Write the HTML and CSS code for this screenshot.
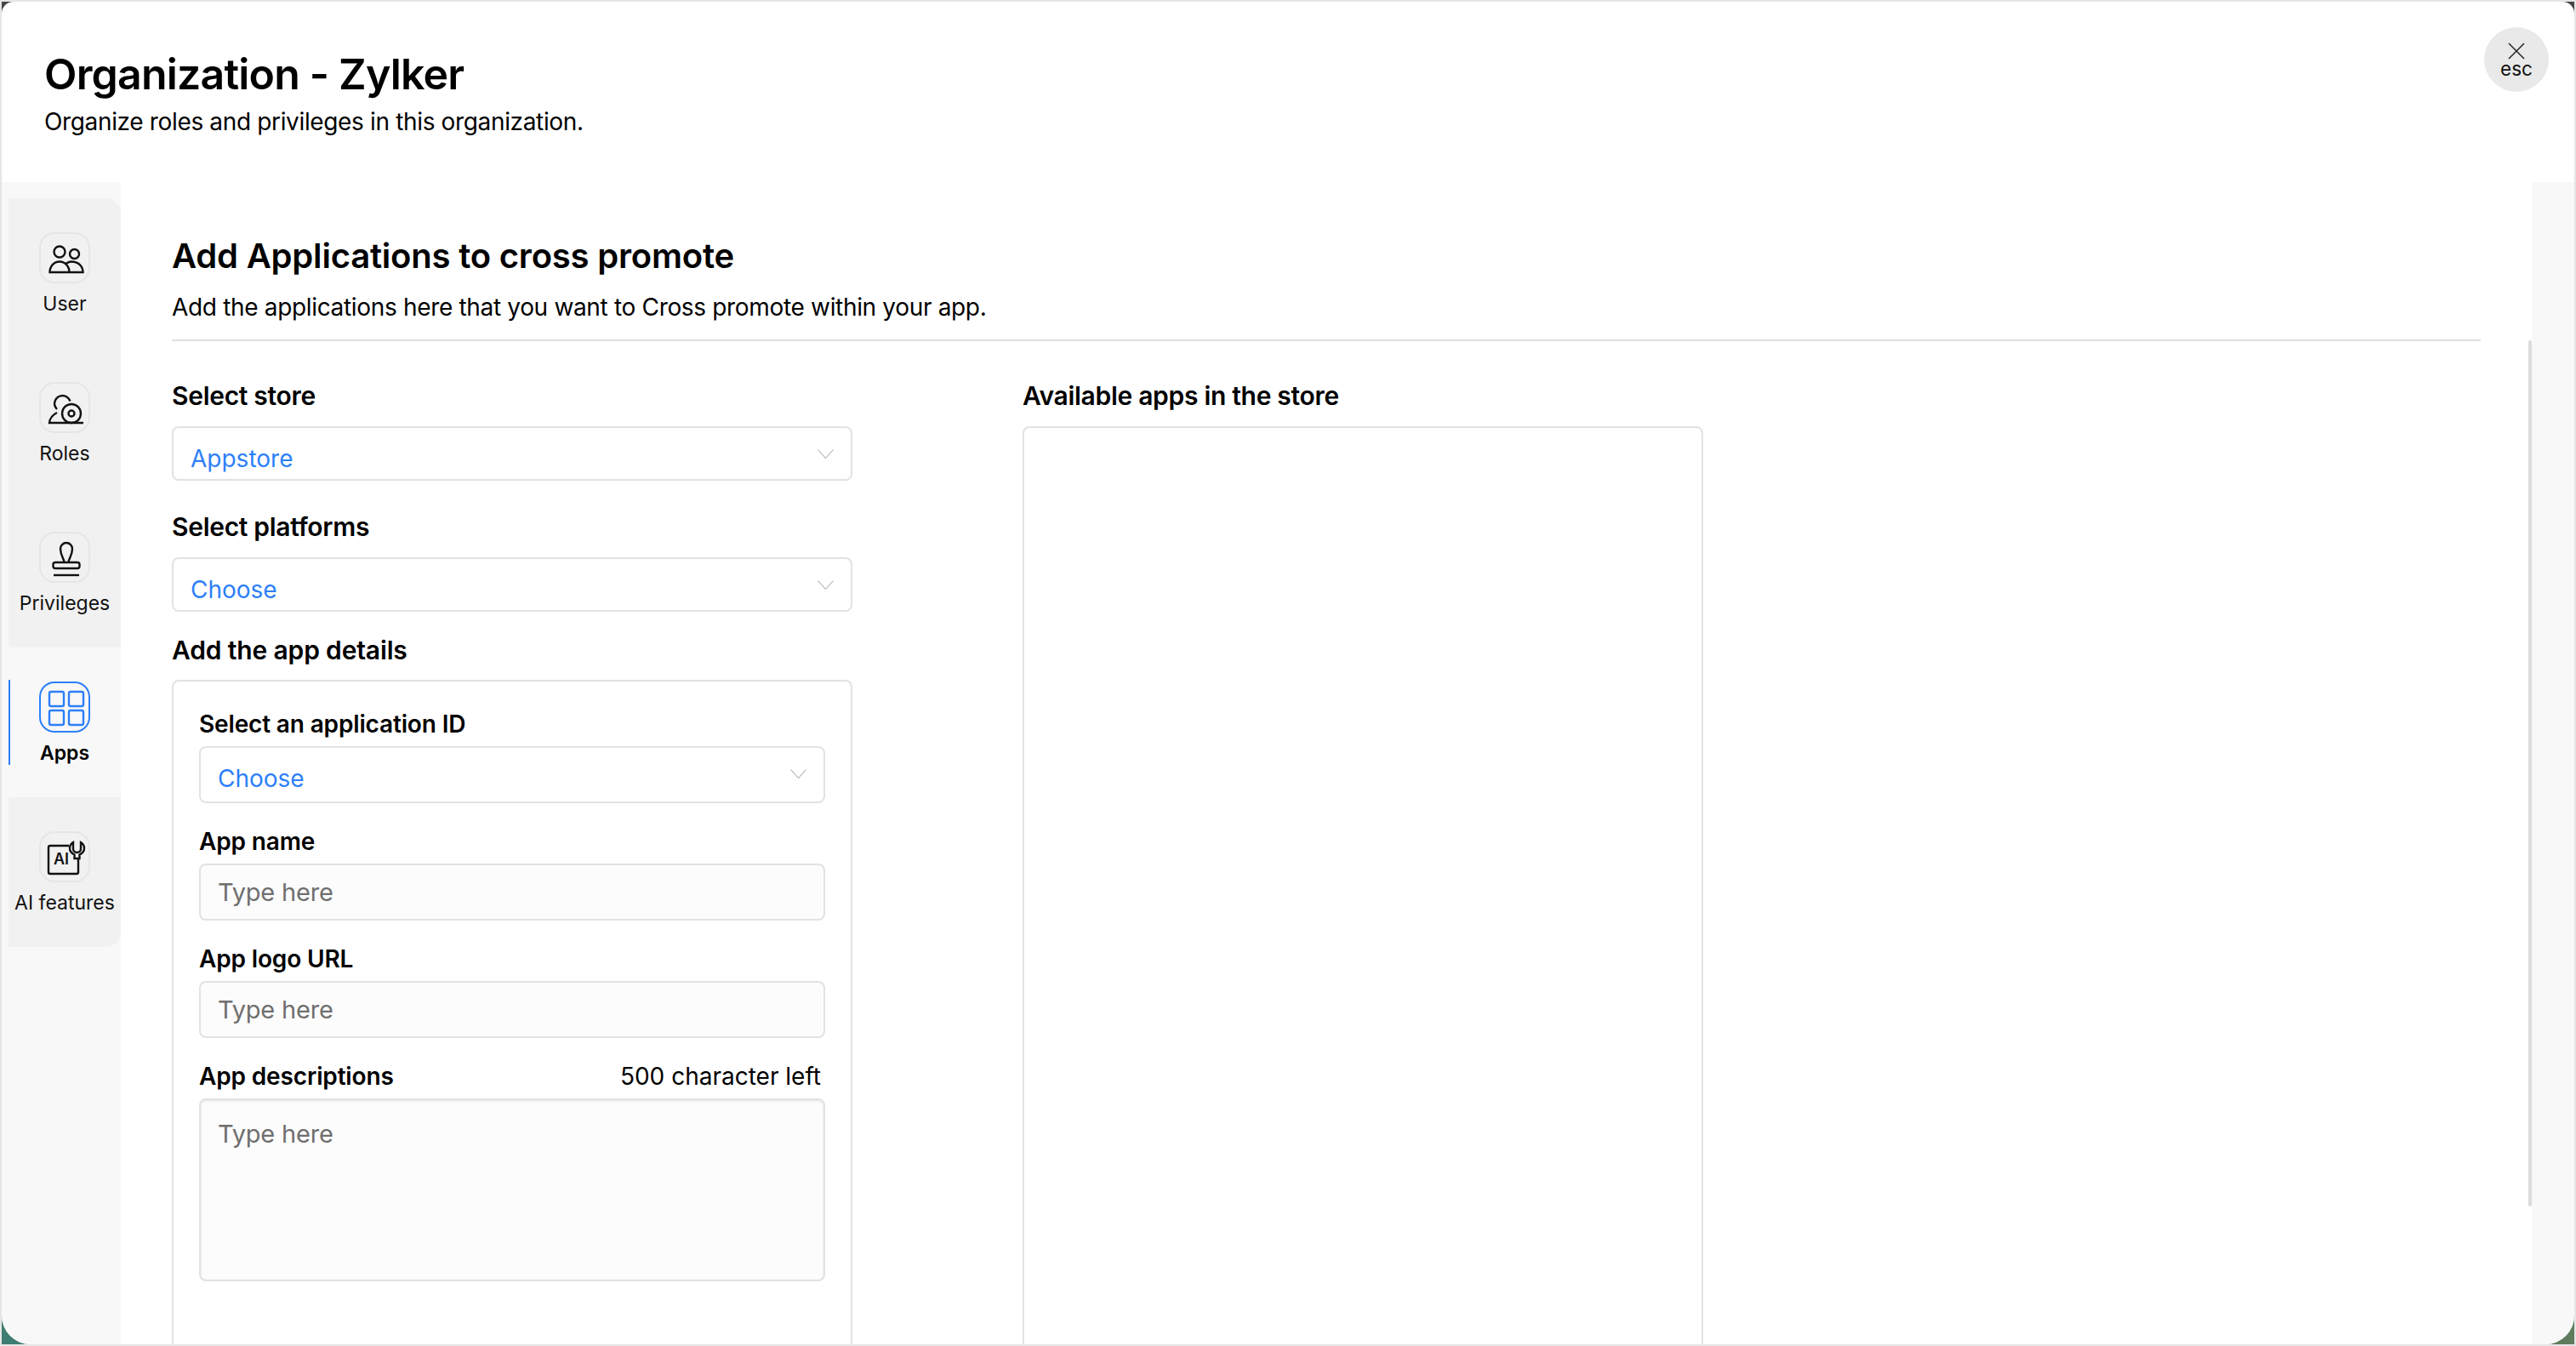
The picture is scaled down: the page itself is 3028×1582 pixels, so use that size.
FILE: index.html
```html
<!DOCTYPE html>
<html>
  <head>
    <title>Organization - Zylker</title>
    <link rel="stylesheet" href="styles.css">
  </head>
  <body>
    <div class="window">
      <header class="topbar">
        <div>
          <h1>Organization - Zylker</h1>
          <p>Organize roles and privileges in this organization.</p>
        </div>
        <button class="close">
          <svg width="20" height="20" viewBox="0 0 20 20"><path d="M1 1l18 18M19 1L1 19" /></svg>
          <span>esc</span>
        </button>
      </header>

      <div class="content">
        <nav class="sidebar">
          <a class="navitem first">
            <span class="navicon">
              <svg viewBox="0 0 60 60"><circle cx="24" cy="23" r="6.5"/><circle cx="41.5" cy="25.5" r="5.5"/><path d="M12.5 47c0-7 5-12.5 11.500-12.500s11.500 5.500 11.500 12.500zM32 36.500c2-1.300 4-2 6-2 7.500 0 13.500 5 13.500 12.500H35"/></svg>
            </span>
            User
          </a>
          <a class="navitem">
            <span class="navicon">
              <svg viewBox="0 0 60 60"><path d="M21 36c-5 2.500-8.500 7-9 12h40"/><path d="M21 32c-2-2-3-4.500-3-7a9.500 9.500 0 0 1 18.500-2.500"/><circle cx="38" cy="37" r="11"/><circle cx="38" cy="37" r="3.500"/></svg>
            </span>
            Roles
          </a>
          <a class="navitem">
            <span class="navicon">
              <svg viewBox="0 0 60 60"><path d="M29.500 36c0-4-4.500-8-4.500-16a7 7 0 0 1 14 0c0 8-4.500 12-4.500 16"/><rect x="16.500" y="36" width="31" height="7" rx="2.500"/><path d="M17 51h30"/></svg>
            </span>
            Privileges
          </a>
          <a class="navitem active">
            <span class="navicon">
              <svg viewBox="0 0 60 60"><rect x="12" y="12" width="17" height="17" rx="2"/><rect x="35" y="12" width="17" height="17" rx="2"/><rect x="12" y="34" width="17" height="17" rx="2"/><rect x="35" y="34" width="17" height="17" rx="2"/></svg>
            </span>
            Apps
          </a>
          <a class="navitem last">
            <span class="navicon">
              <svg viewBox="0 0 60 60"><path d="M35 17H13a2 2 0 0 0-2 2v29a2 2 0 0 0 2 2h31a2 2 0 0 0 2-2V33"/><path d="M40 13c-2.500 1.500-4 4-4 7 0 3.500 2.500 6 5.500 7.500V32h6v-4.500c3-1.500 5.500-4 5.500-7.500 0-3-1.500-5.500-4-7v7.500a4.500 4.500 0 0 1-9 0z"/><text x="17" y="39" class="aitext">AI</text></svg>
            </span>
            AI features
          </a>
        </nav>

        <main class="main">
          <div class="scrollthumb"></div>
          <div class="intro">
            <h2>Add Applications to cross promote</h2>
            <p>Add the applications here that you want to Cross promote within your app.</p>
          </div>

          <div class="columns">
            <section class="column">
              <label class="label">Select store</label>
              <div class="select">
                Appstore
                <svg class="chevron" viewBox="0 0 19 11"><path d="M.5.5l9 10 9-10"/></svg>
              </div>

              <label class="label second">Select platforms</label>
              <div class="select">
                Choose
                <svg class="chevron" viewBox="0 0 19 11"><path d="M.5.5l9 10 9-10"/></svg>
              </div>

              <label class="label third">Add the app details</label>
              <div class="detailsbox">
                <label class="label small">Select an application ID</label>
                <div class="select tall">
                  Choose
                  <svg class="chevron" viewBox="0 0 19 11"><path d="M.5.5l9 10 9-10"/></svg>
                </div>

                <label class="label small spaced">App name</label>
                <input class="textinput" placeholder="Type here">

                <label class="label small spaced">App logo URL</label>
                <input class="textinput" placeholder="Type here">

                <div class="labelrow spaced">
                  <label class="label small">App descriptions</label>
                  <span class="counter">500 character left</span>
                </div>
                <textarea class="textinput area" placeholder="Type here"></textarea>
              </div>
            </section>

            <section class="column">
              <label class="label">Available apps in the store</label>
              <div class="storebox"></div>
            </section>
          </div>
        </main>

        <div class="rightstrip"></div>
      </div>
    </div>
  </body>
</html>
```

FILE: styles.css
```css
* {
  box-sizing: border-box;
}
html, body {
  margin: 0;
  height: 100%;
  overflow: hidden;
}
body {
  background: #e6e6e6;
  padding: 2px;
  font-family: Inter, "Noto Sans", sans-serif;
  color: #000;
}

/* window sits on the desktop wallpaper, only the corners show */
.window {
  height: 1578px;
  background: #fff;
  border-radius: 14px 14px 34px 34px;
  overflow: hidden;
  display: flex;
  flex-direction: column;
}
body::before {
  content: "";
  position: absolute;
  left: 2px;
  right: 2px;
  top: 2px;
  bottom: 2px;
  z-index: -1;
  background: linear-gradient(to bottom, #444 0 50%, transparent 50%), linear-gradient(to right, #3f7d72, #5f7d5c);
}

.topbar {
  height: 212px;
  flex: none;
  display: flex;
  justify-content: space-between;
  padding: 54px 30px 0 50px;
}
.topbar h1 {
  margin: 0;
  font-size: 50px;
  line-height: 62px;
  font-weight: 600;
  letter-spacing: -0.8px;
}
.topbar p {
  margin: 7px 0 0;
  font-size: 28px;
  line-height: 36px;
  letter-spacing: -0.35px;
}
.close {
  width: 76px;
  height: 76px;
  margin-top: -24px;
  padding: 0;
  border: none;
  border-radius: 50%;
  background: #e9e9e9;
  color: #111;
  font-family: inherit;
  font-size: 22.5px;
  line-height: 22px;
  display: flex;
  flex-direction: column;
  align-items: center;
  justify-content: center;
}
.close svg {
  display: block;
  margin-top: 2px;
}
.close svg path {
  fill: none;
  stroke: #222;
  stroke-width: 1.5;
}

.content {
  flex: 1;
  display: flex;
  min-height: 0;
}

.sidebar {
  width: 140px;
  flex: none;
  background: #f8f8f8;
  padding: 19px 0 0 8px;
}
.navitem {
  height: 176px;
  background: #f1f1f1;
  display: flex;
  flex-direction: column;
  align-items: center;
  padding-top: 40px;
  font-size: 23px;
  line-height: 30px;
  color: #111;
}
.navitem.first {
  border-top-right-radius: 18px;
}
.navitem.last {
  border-bottom-right-radius: 18px;
}
.navitem.active {
  background: #f8f8f8;
  position: relative;
  font-weight: 600;
  color: #000;
}
/* blue marker on the selected item */
.navitem.active::before {
  content: "";
  position: absolute;
  left: 0;
  top: 38px;
  width: 2px;
  height: 100px;
  background: #2d7ff9;
}
.navicon {
  width: 60px;
  height: 60px;
  border: 2px solid #e6e6e6;
  border-radius: 18px;
  margin-bottom: 9px;
  display: block;
}
.navicon svg {
  display: block;
  width: 60px;
  height: 60px;
  margin: -2px;
  fill: none;
  stroke: #111;
  stroke-width: 2.4;
}
.navitem.active .navicon {
  border-color: #2d7ff9;
}
.navitem.active .navicon svg {
  stroke: #2d7ff9;
}
.aitext {
  fill: #111;
  stroke: none;
  font-size: 18px;
  font-weight: 600;
}

.main {
  flex: 1;
  min-width: 0;
  position: relative;
  overflow: hidden;
  background: #fff;
  padding: 63px 60px 0;
}
.scrollthumb {
  position: absolute;
  right: 0;
  top: 186px;
  width: 4px;
  height: 1018px;
  background: #dcdcdc;
  border-radius: 2px;
}
.rightstrip {
  width: 50px;
  flex: none;
  background: #f8f8f8;
}

.intro {
  border-bottom: 2px solid #e0e0e0;
  padding-bottom: 20px;
}
.intro h2 {
  margin: 0;
  font-size: 40px;
  line-height: 48px;
  font-weight: 600;
  letter-spacing: -0.2px;
}
.intro p {
  margin: 18px 0 0;
  font-size: 28px;
  line-height: 36px;
  letter-spacing: -0.33px;
}

.columns {
  display: flex;
  gap: 200px;
  padding-top: 46px;
}
.column {
  width: 800px;
  flex: none;
}

.label {
  display: block;
  font-size: 30px;
  line-height: 36px;
  font-weight: 600;
  letter-spacing: -0.3px;
  margin-bottom: 18px;
}
.label.second {
  margin-top: 36px;
  margin-bottom: 18px;
}
.label.third {
  margin-top: 27px;
  margin-bottom: 17px;
  letter-spacing: -0.15px;
}
.label.small {
  font-size: 28px;
  letter-spacing: -0.15px;
  margin-bottom: 8px;
}
.spaced {
  margin-top: 27px;
}

.select {
  height: 64px;
  border: 2px solid #e2e2e2;
  border-radius: 8px;
  padding: 18px 20px 0;
  display: flex;
  justify-content: space-between;
  font-size: 28px;
  line-height: 36px;
  color: #2d7ff9;
}
.select.tall {
  height: 67px;
}
.chevron {
  width: 19px;
  height: 11px;
  margin-top: 7px;
  fill: none;
  stroke: #999;
  stroke-width: 1;
}

.detailsbox {
  border: 2px solid #e2e2e2;
  border-radius: 8px;
  padding: 32px 30px 200px;
}
.storebox {
  height: 1200px;
  border: 2px solid #e2e2e2;
  border-radius: 8px;
}

.textinput {
  display: block;
  width: 100%;
  height: 67px;
  border: 2px solid #e2e2e2;
  border-radius: 8px;
  background: #fcfcfc;
  padding: 0 20px;
  font-family: inherit;
  font-size: 29px;
  letter-spacing: -0.2px;
  color: #000;
  outline: none;
}
.textinput::placeholder {
  color: #6f6f6f;
  opacity: 1;
}
.area {
  height: 215px;
  padding-top: 22px;
  line-height: 36px;
  resize: none;
  box-shadow: inset 0 1px 3px rgba(0, 0, 0, 0.1);
}

.labelrow {
  display: flex;
  justify-content: space-between;
  align-items: baseline;
  padding-right: 5px;
}
.counter {
  font-size: 28px;
  line-height: 36px;
}
```
